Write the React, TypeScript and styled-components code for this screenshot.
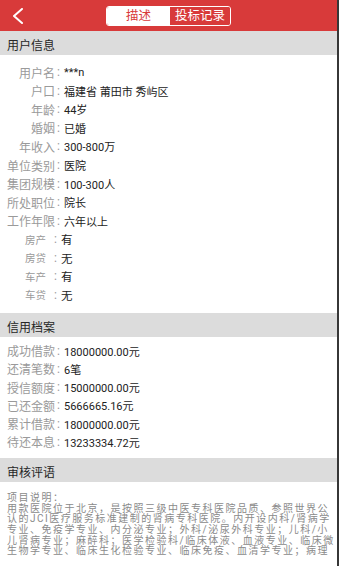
import React from "react";
import styled, { createGlobalStyle } from "styled-components";

const GlobalStyle = createGlobalStyle`
  html, body { margin: 0; padding: 0; background: #ffffff; }
  body { width: 340px; height: 566px; overflow: hidden; }
  * { box-sizing: border-box; }
`;

const RED = "#d83a3a";
const FONT = `Roboto, "Noto Sans CJK SC", sans-serif`;

const Frame = styled.div`
  width: 340px;
  height: 566px;
  display: flex;
  overflow: hidden;
  font-family: ${FONT};
`;

const Page = styled.div`
  width: 337px;
  display: flex;
  flex-direction: column;
  overflow: hidden;
`;

const EdgeLine = styled.div`
  width: 2px;
  background: rgba(20, 20, 20, 0.85);
`;

const NavBar = styled.header`
  height: 31px;
  background: ${RED};
  display: grid;
  grid-template-columns: 1fr auto 1fr;
  align-items: center;
  flex-shrink: 0;
`;

const BackButton = styled.div`
  display: flex;
  align-items: center;
  padding-left: 12px;
  height: 31px;
`;

const Segmented = styled.div`
  display: flex;
  height: 20px;
  margin-top: 1px;
  border: 1px solid #ffffff;
  border-radius: 3px;
  overflow: hidden;
`;

const Tab = styled.div<{ $active?: boolean; $w: number }>`
  width: ${(p) => p.$w}px;
  display: flex;
  align-items: center;
  justify-content: center;
  font-size: 12.5px;
  line-height: 1;
  background: ${(p) => (p.$active ? "#ffffff" : RED)};
  color: ${(p) => (p.$active ? RED : "#ffffff")};
`;

const SectionHeader = styled.div`
  height: 24px;
  background: #dcdcdc;
  display: flex;
  align-items: center;
  padding-left: 7px;
  padding-top: 2px;
  font-size: 12px;
  color: #262626;
  flex-shrink: 0;
`;

const SectionBody = styled.div<{ $pt: number; $pb: number }>`
  display: flex;
  flex-direction: column;
  padding: ${(p) => p.$pt}px 0 ${(p) => p.$pb}px 7px;
  flex-shrink: 0;
`;

const Row = styled.div<{ $h: number }>`
  height: ${(p) => p.$h}px;
  display: flex;
  align-items: center;
  white-space: nowrap;
`;

const Label = styled.span<{ $small?: boolean }>`
  width: ${(p) => (p.$small ? 39 : 48)}px;
  text-align: right;
  font-size: ${(p) => (p.$small ? 10.5 : 12)}px;
  color: #9a9a9a;
`;

const Colon = styled.span<{ $small?: boolean }>`
  width: ${(p) => (p.$small ? 15 : 9)}px;
  padding-left: ${(p) => (p.$small ? 8 : 2)}px;
  font-size: 12px;
  color: #9a9a9a;
`;

const Value = styled.span<{ $small?: boolean }>`
  font-size: ${(p) => (p.$small ? 11.5 : 11)}px;
  color: #222222;
`;

const Paragraph = styled.div`
  padding: 11px 0 0 7px;
  font-size: 10px;
  letter-spacing: 1.5px;
  line-height: 10.7px;
  color: #8a8a8a;
  white-space: nowrap;
`;

const ParagraphLine = styled.div`
  height: 10.7px;
`;

type Item = { label: string; value: string; small?: boolean };

const userInfo: Item[] = [
  { label: "用户名", value: "***n" },
  { label: "户口", value: "福建省 莆田市 秀屿区" },
  { label: "年龄", value: "44岁" },
  { label: "婚姻", value: "已婚" },
  { label: "年收入", value: "300-800万" },
  { label: "单位类别", value: "医院" },
  { label: "集团规模", value: "100-300人" },
  { label: "所处职位", value: "院长" },
  { label: "工作年限", value: "六年以上" },
  { label: "房产", value: "有", small: true },
  { label: "房贷", value: "无", small: true },
  { label: "车产", value: "有", small: true },
  { label: "车贷", value: "无", small: true },
];

const credit: Item[] = [
  { label: "成功借款", value: "18000000.00元" },
  { label: "还清笔数", value: "6笔" },
  { label: "授信额度", value: "15000000.00元" },
  { label: "已还金额", value: "5666665.16元" },
  { label: "累计借款", value: "18000000.00元" },
  { label: "待还本息", value: "13233334.72元" },
];

const paragraphLines = [
  "项目说明：",
  "用款医院位于北京，是按照三级中医专科医院品质、参照世界公",
  "认的JCI医疗服务标准建制的肾病专科医院。内开设内科/肾病学",
  "专业、免疫学专业、内分泌专业；外科/泌尿外科专业；儿科/小",
  "儿肾病专业；麻醉科；医学检验科/临床体液、血液专业、临床微",
  "生物学专业、临床生化检验专业、临床免疫、血清学专业；病理",
];

const InfoRows: React.FC<{ items: Item[]; h: number }> = ({ items, h }) => (
  <>
    {items.map((it) => (
      <Row key={it.label} $h={h}>
        <Label $small={it.small}>{it.label}</Label>
        <Colon $small={it.small}>:</Colon>
        <Value $small={it.small}>{it.value}</Value>
      </Row>
    ))}
  </>
);

export default function App() {
  return (
    <>
      <GlobalStyle />
      <Frame>
        <Page>
          <NavBar>
            <BackButton>
              <svg width="12" height="16" viewBox="0 0 12 16" fill="none">
                <polyline
                  points="10,1 2,8 10,15"
                  stroke="#ffffff"
                  strokeWidth="2"
                  strokeLinecap="round"
                  strokeLinejoin="round"
                />
              </svg>
            </BackButton>
            <Segmented>
              <Tab $active $w={63}>描述</Tab>
              <Tab $w={60}>投标记录</Tab>
            </Segmented>
            <div />
          </NavBar>

          <SectionHeader>用户信息</SectionHeader>
          <SectionBody $pt={8} $pb={9}>
            <InfoRows items={userInfo} h={18.55} />
          </SectionBody>

          <SectionHeader>信用档案</SectionHeader>
          <SectionBody $pt={4.6} $pb={7.2}>
            <InfoRows items={credit} h={18.2} />
          </SectionBody>

          <SectionHeader>审核评语</SectionHeader>
          <Paragraph>
            {paragraphLines.map((l, i) => (
              <ParagraphLine key={i}>{l}</ParagraphLine>
            ))}
          </Paragraph>
        </Page>
        <EdgeLine />
      </Frame>
    </>
  );
}
